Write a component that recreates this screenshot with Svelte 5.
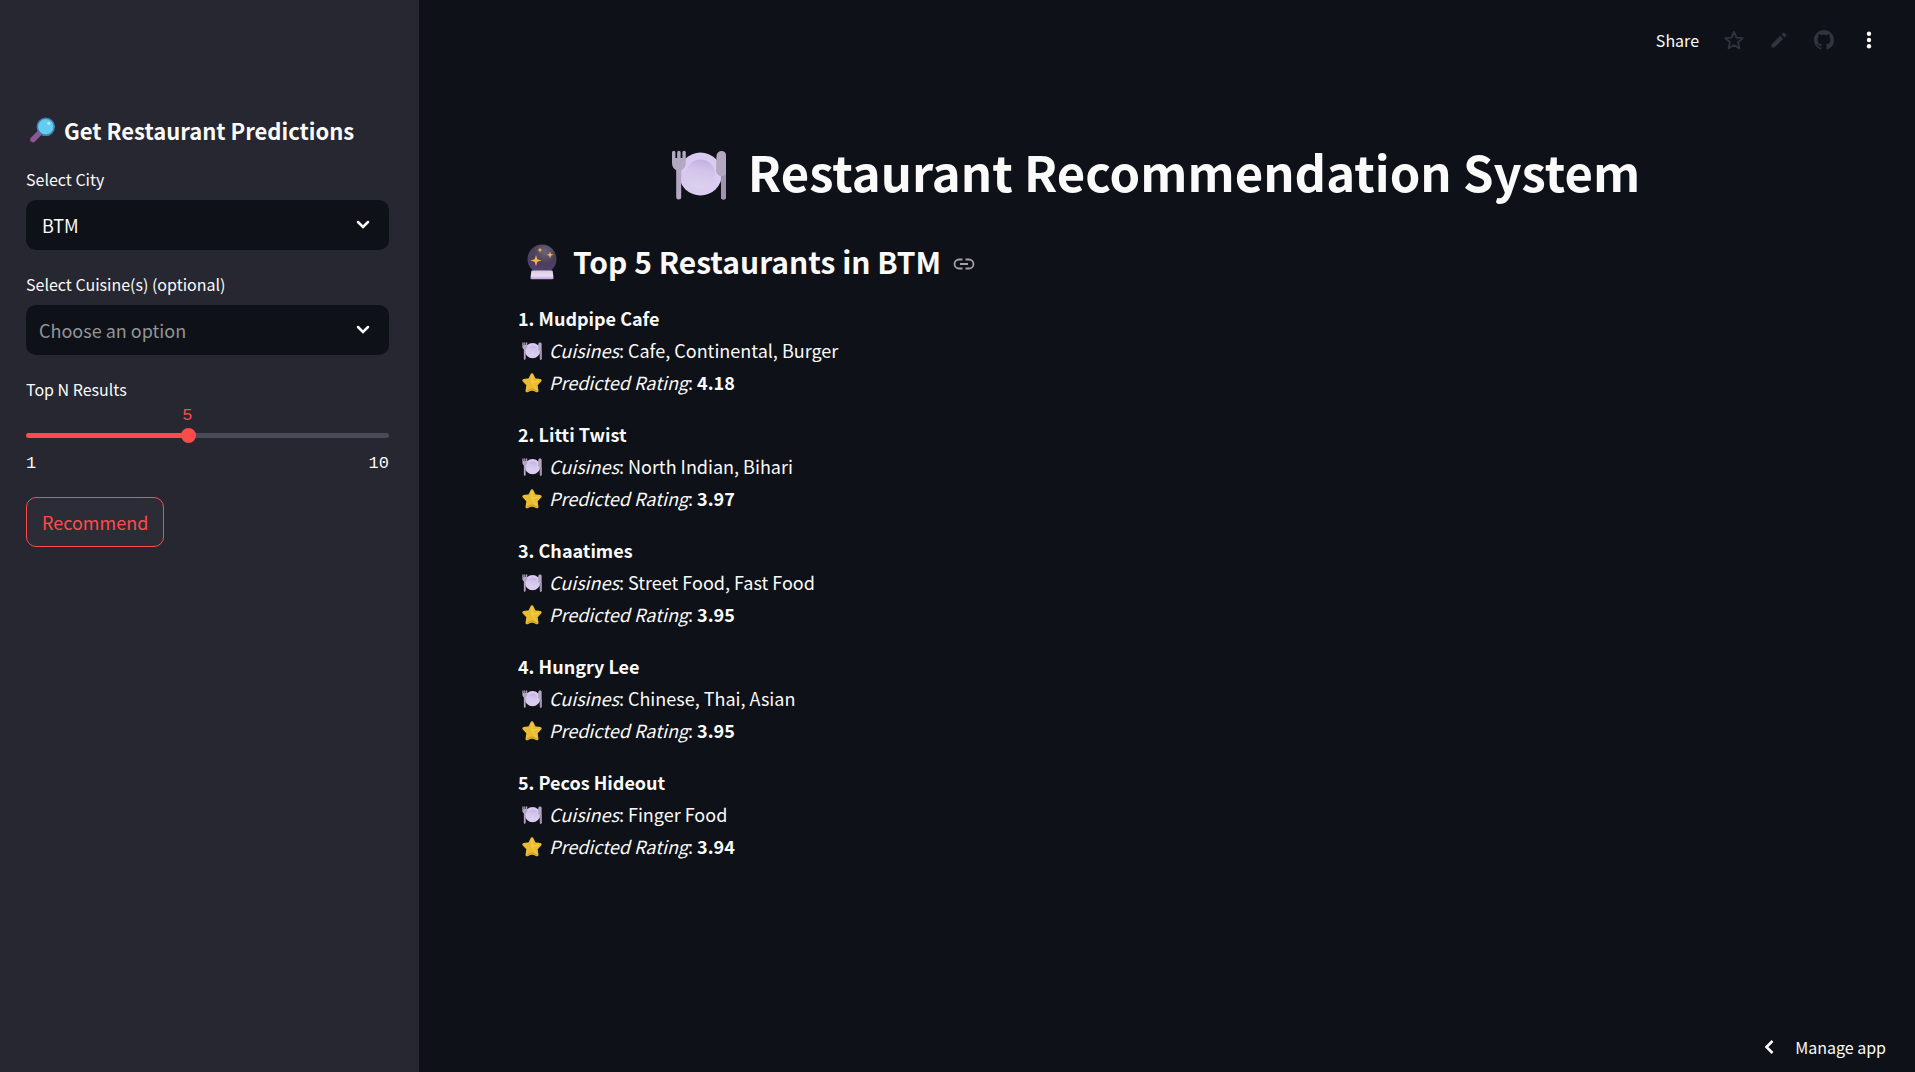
<script>
  const cities = ['BTM'];
  let city = $state('BTM');
  let cuisine = $state('');
  let count = $state(5);
  const min = 1;
  const max = 10;
  let percent = $derived(((count - min) / (max - min)) * 100);

  const restaurants = [
    { name: 'Mudpipe Cafe', cuisines: 'Cafe, Continental, Burger', rating: '4.18' },
    { name: 'Litti Twist', cuisines: 'North Indian, Bihari', rating: '3.97' },
    { name: 'Chaatimes', cuisines: 'Street Food, Fast Food', rating: '3.95' },
    { name: 'Hungry Lee', cuisines: 'Chinese, Thai, Asian', rating: '3.95' },
    { name: 'Pecos Hideout', cuisines: 'Finger Food', rating: '3.94' }
  ];
</script>

{#snippet plate()}
  <svg class="plate" viewBox="0 0 56 50" aria-hidden="true">
    <defs>
      <linearGradient id="rim" x1="0" y1="0" x2="1" y2="1">
        <stop offset="0" stop-color="#d8c8ef" />
        <stop offset="1" stop-color="#dccdf3" />
      </linearGradient>
      <linearGradient id="dish" x1="0.6" y1="0" x2="0.4" y2="1">
        <stop offset="0" stop-color="#c3aee2" />
        <stop offset="0.35" stop-color="#d2c3ea" />
        <stop offset="1" stop-color="#dcd2ee" />
      </linearGradient>
    </defs>
    <circle cx="29.500" cy="24" r="21.500" fill="url(#rim)" />
    <circle cx="29.500" cy="24" r="14.500" fill="url(#dish)" />
    <path d="M1 2.500a1.700 1.700 0 0 1 3.400 0V8h1.800V2.500a1.700 1.700 0 0 1 3.400 0V8h1.800V2.500a1.700 1.700 0 0 1 3.400 0V13c0 3.500-2 6-4.600 7.300V47a2.500 2.500 0 0 1-5 0V20.300C2.700 19 1 16.500 1 13z" fill="#b3a8c1" />
    <path d="M45.500 5.500C46 2.500 48 1 50.500 1 53.500 1 55 3 55 5v42a2.500 2.500 0 0 1-5 0V26.500c-3-1-5-3-5-6z" fill="#b3a8c1" />
    <path d="M50 26.500l5-2V47a2.500 2.500 0 0 1-5 0z" fill="#9f93ad" />
  </svg>
{/snippet}

{#snippet chevron()}
  <svg class="chevron" viewBox="0 0 14 10" aria-hidden="true">
    <path d="M2 2l5 5 5-5" />
  </svg>
{/snippet}

<div class="app">
  <aside class="sidebar">
    <h3>
      <svg class="lens" viewBox="0 0 26 26" aria-hidden="true">
        <path d="M3 22.500l7.500-7.500" stroke="#8d5796" stroke-width="5.500" stroke-linecap="round" />
        <circle cx="15.800" cy="9.800" r="8.500" fill="#62cdec" stroke="#4478b8" stroke-width="1.600" />
        <circle cx="18.800" cy="6.200" r="1.500" fill="#b9e6fb" />
      </svg>
      <span>Get Restaurant Predictions</span>
    </h3>

    <div class="field">
      <label for="city">Select City</label>
      <div class="box">
        <select id="city" bind:value={city}>
          {#each cities as c}<option>{c}</option>{/each}
        </select>
        {@render chevron()}
      </div>
    </div>

    <div class="field">
      <label for="cuisine">Select Cuisine(s) (optional)</label>
      <div class="box">
        <input id="cuisine" type="text" placeholder="Choose an option" bind:value={cuisine} />
        {@render chevron()}
      </div>
    </div>

    <div class="field slider">
      <label for="count">Top N Results</label>
      <div class="range" style:--fill="{percent}%">
        <output for="count">{count}</output>
        <input id="count" type="range" {min} {max} bind:value={count} />
      </div>
      <div class="ticks"><span>{min}</span><span>{max}</span></div>
    </div>

    <button class="recommend" type="button">Recommend</button>
  </aside>

  <main>
    <header class="toolbar">
      <button class="share" type="button">Share</button>
      <button class="tool" type="button" aria-label="Favorite">
        <svg width="24" height="24" viewBox="0 0 24 24"><path d="M12 3.800l2.500 5.800 6.300.5-4.800 4.100 1.500 6.200-5.500-3.300-5.500 3.300L8 14.200l-4.800-4.100 6.300-.5z" fill="none" stroke="currentColor" stroke-width="1.800" stroke-linejoin="round" /></svg>
      </button>
      <button class="tool" type="button" aria-label="Edit">
        <svg width="20" height="20" viewBox="0 0 24 24"><path d="M3 17.500V21h3.500L17 10.500 13.500 7zM20.500 7.100a1.200 1.200 0 0 0 0-1.700l-1.900-1.900a1.200 1.200 0 0 0-1.700 0L15 5.400 18.600 9z" fill="currentColor" /></svg>
      </button>
      <button class="tool" type="button" aria-label="View source">
        <svg width="20" height="20" viewBox="0 0 16 16"><path fill="currentColor" d="M8 0C3.580 0 0 3.580 0 8c0 3.540 2.290 6.530 5.470 7.590.4.070.55-.17.55-.38 0-.19-.01-.82-.01-1.490-2.010.37-2.530-.49-2.690-.94-.09-.23-.48-.94-.82-1.130-.28-.15-.68-.52-.01-.53.63-.01 1.080.58 1.230.82.72 1.210 1.870.87 2.330.66.07-.52.28-.87.51-1.070-1.780-.2-3.640-.89-3.640-3.950 0-.87.31-1.590.82-2.150-.08-.2-.36-1.020.08-2.120 0 0 .67-.21 2.200.82.64-.18 1.320-.27 2-.27.68 0 1.360.09 2 .27 1.530-1.040 2.200-.82 2.200-.82.44 1.100.16 1.920.08 2.120.51.56.82 1.270.82 2.150 0 3.070-1.870 3.750-3.650 3.950.29.25.54.73.54 1.480 0 1.070-.01 1.930-.01 2.200 0 .21.15.46.55.38A8.013 8.013 0 0016 8c0-4.420-3.580-8-8-8z" /></svg>
      </button>
      <button class="tool bright" type="button" aria-label="More options">
        <svg width="20" height="20" viewBox="0 0 20 20" fill="currentColor"><circle cx="10" cy="3.700" r="2.200" /><circle cx="10" cy="10" r="2.200" /><circle cx="10" cy="16.300" r="2.200" /></svg>
      </button>
    </header>

    <section class="content">
      <h1>{@render plate()}<span>Restaurant Recommendation System</span></h1>

      <h2>
        <svg class="ball" viewBox="0 0 30 36" aria-hidden="true">
          <defs>
            <radialGradient id="orb" cx="0.6" cy="0.25" r="0.8">
              <stop offset="0" stop-color="#6d6478" />
              <stop offset="0.5" stop-color="#4a3f58" />
              <stop offset="1" stop-color="#53417c" />
            </radialGradient>
            <linearGradient id="base" x1="0" y1="0" x2="0" y2="1">
              <stop offset="0" stop-color="#d5cbdf" />
              <stop offset="0.6" stop-color="#e9def2" />
              <stop offset="1" stop-color="#c89be2" />
            </linearGradient>
          </defs>
          <circle cx="15" cy="15" r="14.500" fill="url(#orb)" />
          <path d="M5.500 26.500h19c.8 0 1.200.5 1.300 1.200l.7 6.300c.1.700-.3 1.200-1 1.200h-21c-.7 0-1.100-.5-1-1.200l.7-6.300c.1-.7.5-1.200 1.300-1.200z" fill="url(#base)" />
          <path d="M9 11l1.300 4.200 4.200 1.300-4.200 1.300L9 22.300l-1.300-4.500-4.200-1.300 4.200-1.300zM23 7.500l.9 2.400 2.400.9-2.400.9-.9 2.700-.9-2.700-2.400-.9 2.400-.9zM13 3.500l.7 1.800 1.900.7-1.900.7L13 8.800l-.7-2.100-1.900-.7 1.900-.7z" fill="#fcb255" />
        </svg>
        <span>Top 5 Restaurants in BTM</span>
        <a href="#top-restaurants" aria-label="Link to heading">
          <svg width="22" height="12" viewBox="0 0 22 12" fill="none" stroke="currentColor" stroke-width="1.800"><path d="M9.500 1.500H6a4.500 4.500 0 0 0 0 9h3.500M12.500 1.500H16a4.500 4.500 0 0 1 0 9h-3.500M7 6h8" /></svg>
        </a>
      </h2>

      {#each restaurants as r, i}
        <article>
          <p><strong>{i + 1}. {r.name}</strong></p>
          <p>{@render plate()}<span><em>Cuisines</em>: {r.cuisines}</span></p>
          <p>
            <svg class="star" viewBox="0 0 20 20" aria-hidden="true">
              <path d="M10 1.600l2.500 5 5.700.9-4 4.200.9 6.200-5.100-2.300-5.100 2.300.9-6.200-4-4.200 5.700-.9z" fill="#e9bc32" stroke="#e9bc32" stroke-width="2.800" stroke-linejoin="round" />
              <path d="M10 9l7-.8M10 9l4.500 7.800M10 9V2" stroke="#f6d551" stroke-width="0.800" />
              <path d="M5 18l5-2.200 5 2.200" fill="none" stroke="#d49a2b" stroke-width="1.200" />
            </svg>
            <span><em>Predicted Rating</em>: <strong>{r.rating}</strong></span>
          </p>
        </article>
      {/each}
    </section>

    <footer>
      <button class="manage" type="button">
        <svg width="10" height="16" viewBox="0 0 10 16" fill="none" stroke="currentColor" stroke-width="2.600"><path d="M8.500 2L2.500 8l6 6" /></svg>
        Manage app
      </button>
    </footer>
  </main>
</div>

<style>
  :global(body) {
    background: #0e1117;
  }

  .app {
    display: grid;
    grid-template-columns: 419px 1fr;
    min-height: 100vh;
    color: #fafafa;
    font-family: 'Noto Sans CJK SC', 'Noto Sans', sans-serif;
    font-size: 18px;
    line-height: 32px;
  }

  button,
  input,
  select {
    font: inherit;
    color: inherit;
    margin: 0;
    border: 0;
    background: none;
  }

  h1,
  h2,
  h3,
  p {
    margin: 0;
    display: flex;
    align-items: center;
  }

  svg {
    flex: none;
    display: block;
  }

  .sidebar {
    box-sizing: border-box;
    padding: 112px 30px 24px 26px;
    background: #262730;
    display: flex;
    flex-direction: column;
    align-items: stretch;
  }

  h3 {
    font-size: 22px;
    line-height: 36px;
    gap: 8px;
    padding-left: 4px;
    margin-bottom: 19px;
  }

  .lens {
    width: 26px;
    height: 26px;
    fill: none;
  }

  .field {
    display: flex;
    flex-direction: column;
    margin-bottom: 22px;
  }

  label {
    font-size: 16px;
    line-height: 24px;
    margin-bottom: 9px;
  }

  .box {
    display: grid;
    align-items: center;
    height: 50px;
    border-radius: 10px;
    background: #0e1117;
  }

  .box > :global(*) {
    grid-area: 1 / 1;
  }

  .box select,
  .box input {
    box-sizing: border-box;
    width: 100%;
    height: 100%;
    padding: 0 48px 0 16px;
    appearance: none;
    outline-offset: -2px;
  }

  .box input {
    padding-left: 13px;
  }

  .box input::placeholder {
    color: #929498;
    opacity: 1;
  }

  .chevron {
    width: 14px;
    height: 10px;
    justify-self: end;
    margin-right: 19px;
    pointer-events: none;
    fill: none;
    stroke: #fafafa;
    stroke-width: 2.5;
    stroke-linecap: round;
  }

  .slider label {
    margin-bottom: 0;
  }

  .slider {
    margin-bottom: 20px;
  }

  .range {
    position: relative;
    padding-top: 27px;
  }

  output {
    position: absolute;
    top: 2px;
    left: var(--fill);
    transform: translateX(-50%);
    color: #ff4b4b;
    font-family: 'Liberation Mono', monospace;
    font-size: 17px;
    line-height: 26px;
  }

  .range input {
    display: block;
    width: 100%;
    height: 15px;
    appearance: none;
  }

  .range input::-webkit-slider-runnable-track {
    height: 5px;
    border-radius: 3px;
    background: linear-gradient(to right, #ff4b4b var(--fill), #484a55 var(--fill));
  }

  .range input::-webkit-slider-thumb {
    appearance: none;
    width: 15px;
    height: 15px;
    margin-top: -5px;
    border-radius: 50%;
    background: #ff4b4b;
  }

  .ticks {
    display: flex;
    justify-content: space-between;
    margin-top: 8px;
    font-family: 'Liberation Mono', monospace;
    font-size: 17px;
    line-height: 26px;
  }

  .recommend {
    align-self: flex-start;
    height: 50px;
    padding: 0 15px;
    border: 1px solid #ff4b4b;
    border-radius: 10px;
    background: #2b2c36;
    color: #ff4b4b;
  }

  main {
    display: flex;
    flex-direction: column;
    min-width: 0;
  }

  .toolbar {
    display: flex;
    justify-content: flex-end;
    align-items: center;
    height: 80px;
    padding-right: 24px;
  }

  .share {
    padding: 0 12px;
    font-size: 16px;
  }

  .tool {
    display: grid;
    place-items: center;
    width: 45px;
    height: 40px;
    padding: 0;
    color: #31333f;
  }

  .bright {
    color: #fafafa;
  }

  .content {
    padding: 57px 100px 0 99px;
  }

  h1 {
    justify-content: center;
    gap: 21px;
    padding-right: 22px;
    font-size: 49px;
    line-height: 68px;
  }

  h1 :global(.plate) {
    width: 56px;
    height: 50px;
    margin-top: 8px;
  }

  h2 {
    padding: 34px 0 19px 9px;
    font-size: 30px;
    line-height: 44px;
    gap: 16px;
  }

  .ball {
    width: 30px;
    height: 36px;
    margin-top: 2px;
  }

  h2 a {
    color: #a0a2a6;
    margin: 6px 0 0 -4px;
  }

  article {
    margin-bottom: 20px;
  }

  article p {
    gap: 7px;
  }

  article p :global(.plate),
  .star {
    width: 20px;
    height: 20px;
    margin: 2px 0 0 4px;
  }

  footer {
    display: flex;
    justify-content: flex-end;
    margin-top: auto;
    padding: 0 29px 9px 0;
  }

  .manage {
    display: flex;
    align-items: center;
    gap: 21px;
    padding: 0;
    font-size: 16px;
  }
</style>
